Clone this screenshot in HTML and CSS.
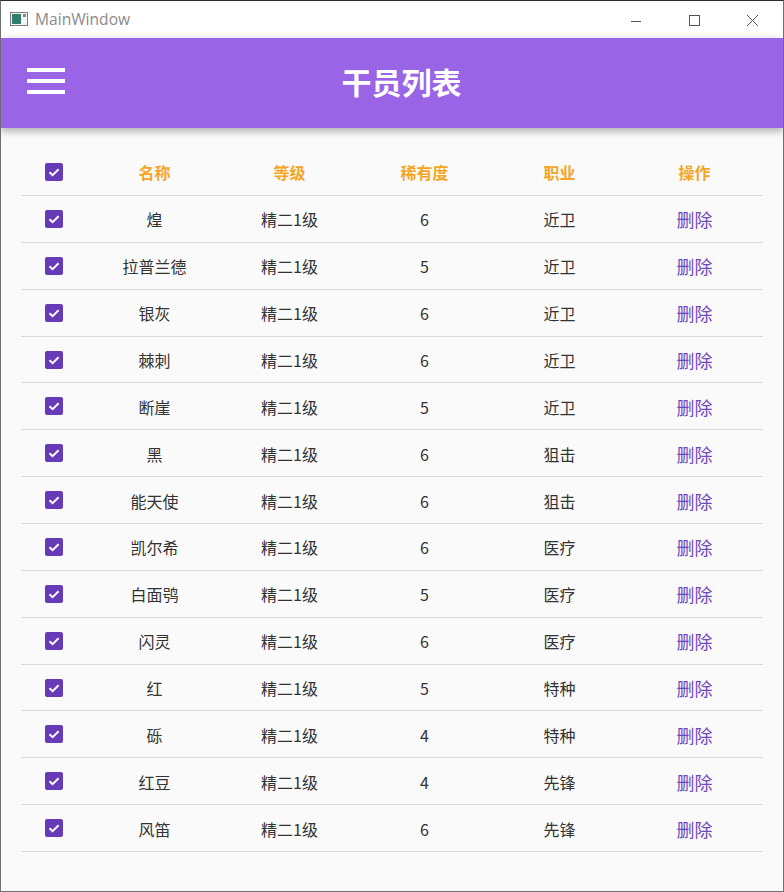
FILE: index.html
```html
<!DOCTYPE html>
<html lang="zh">
<head>
<meta charset="utf-8">
<title>MainWindow</title>
<link rel="stylesheet" href="styles.css">
</head>
<body>
<div class="window">
  <div class="titlebar">
    <div class="tb-left">
      <svg class="app-icon" width="18" height="14" viewBox="0 0 18 14">
        <rect x="0.5" y="0.5" width="17" height="13" fill="#f4f4f4" stroke="#7a7a7a"/>
        <rect x="2" y="2" width="9" height="10" fill="#2f7d6c"/>
        <rect x="13" y="2" width="3" height="3" fill="#8a8a8a"/>
      </svg>
      <span class="tb-title">MainWindow</span>
    </div>
    <div class="tb-controls">
      <svg class="ctl" width="46" height="30" viewBox="0 0 46 30"><line x1="18" y1="18.5" x2="28" y2="18.5" stroke="#555" stroke-width="1"/></svg>
      <svg class="ctl" width="46" height="30" viewBox="0 0 46 30"><rect x="18.5" y="12.5" width="10" height="10" fill="none" stroke="#555" stroke-width="1"/></svg>
      <svg class="ctl" width="46" height="30" viewBox="0 0 46 30"><path d="M18 12 L29 23 M29 12 L18 23" stroke="#555" stroke-width="1"/></svg>
    </div>
  </div>
  <div class="appbar">
    <div class="hamburger"><span></span><span></span><span></span></div>
    <h1 class="app-title">干员列表</h1>
  </div>
  <div class="content">
    <div class="table">
      <div class="row head">
        <div class="cell chk"><span class="checkbox"><svg width="18" height="18" viewBox="0 0 18 18"><path d="M4.5 9.2 L7.6 12.2 L13.6 6.2" fill="none" stroke="#fff" stroke-width="2"/></svg></span></div>
        <div class="cell">名称</div><div class="cell">等级</div><div class="cell">稀有度</div><div class="cell">职业</div><div class="cell">操作</div>
      </div>
      <div class="row"><div class="cell chk"><span class="checkbox"><svg width="18" height="18" viewBox="0 0 18 18"><path d="M4.5 9.2 L7.6 12.2 L13.6 6.2" fill="none" stroke="#fff" stroke-width="2"/></svg></span></div><div class="cell">煌</div><div class="cell">精二1级</div><div class="cell">6</div><div class="cell">近卫</div><div class="cell del">删除</div></div>
      <div class="row"><div class="cell chk"><span class="checkbox"><svg width="18" height="18" viewBox="0 0 18 18"><path d="M4.5 9.2 L7.6 12.2 L13.6 6.2" fill="none" stroke="#fff" stroke-width="2"/></svg></span></div><div class="cell">拉普兰德</div><div class="cell">精二1级</div><div class="cell">5</div><div class="cell">近卫</div><div class="cell del">删除</div></div>
      <div class="row"><div class="cell chk"><span class="checkbox"><svg width="18" height="18" viewBox="0 0 18 18"><path d="M4.5 9.2 L7.6 12.2 L13.6 6.2" fill="none" stroke="#fff" stroke-width="2"/></svg></span></div><div class="cell">银灰</div><div class="cell">精二1级</div><div class="cell">6</div><div class="cell">近卫</div><div class="cell del">删除</div></div>
      <div class="row"><div class="cell chk"><span class="checkbox"><svg width="18" height="18" viewBox="0 0 18 18"><path d="M4.5 9.2 L7.6 12.2 L13.6 6.2" fill="none" stroke="#fff" stroke-width="2"/></svg></span></div><div class="cell">棘刺</div><div class="cell">精二1级</div><div class="cell">6</div><div class="cell">近卫</div><div class="cell del">删除</div></div>
      <div class="row"><div class="cell chk"><span class="checkbox"><svg width="18" height="18" viewBox="0 0 18 18"><path d="M4.5 9.2 L7.6 12.2 L13.6 6.2" fill="none" stroke="#fff" stroke-width="2"/></svg></span></div><div class="cell">断崖</div><div class="cell">精二1级</div><div class="cell">5</div><div class="cell">近卫</div><div class="cell del">删除</div></div>
      <div class="row"><div class="cell chk"><span class="checkbox"><svg width="18" height="18" viewBox="0 0 18 18"><path d="M4.5 9.2 L7.6 12.2 L13.6 6.2" fill="none" stroke="#fff" stroke-width="2"/></svg></span></div><div class="cell">黑</div><div class="cell">精二1级</div><div class="cell">6</div><div class="cell">狙击</div><div class="cell del">删除</div></div>
      <div class="row"><div class="cell chk"><span class="checkbox"><svg width="18" height="18" viewBox="0 0 18 18"><path d="M4.5 9.2 L7.6 12.2 L13.6 6.2" fill="none" stroke="#fff" stroke-width="2"/></svg></span></div><div class="cell">能天使</div><div class="cell">精二1级</div><div class="cell">6</div><div class="cell">狙击</div><div class="cell del">删除</div></div>
      <div class="row"><div class="cell chk"><span class="checkbox"><svg width="18" height="18" viewBox="0 0 18 18"><path d="M4.5 9.2 L7.6 12.2 L13.6 6.2" fill="none" stroke="#fff" stroke-width="2"/></svg></span></div><div class="cell">凯尔希</div><div class="cell">精二1级</div><div class="cell">6</div><div class="cell">医疗</div><div class="cell del">删除</div></div>
      <div class="row"><div class="cell chk"><span class="checkbox"><svg width="18" height="18" viewBox="0 0 18 18"><path d="M4.5 9.2 L7.6 12.2 L13.6 6.2" fill="none" stroke="#fff" stroke-width="2"/></svg></span></div><div class="cell">白面鸮</div><div class="cell">精二1级</div><div class="cell">5</div><div class="cell">医疗</div><div class="cell del">删除</div></div>
      <div class="row"><div class="cell chk"><span class="checkbox"><svg width="18" height="18" viewBox="0 0 18 18"><path d="M4.5 9.2 L7.6 12.2 L13.6 6.2" fill="none" stroke="#fff" stroke-width="2"/></svg></span></div><div class="cell">闪灵</div><div class="cell">精二1级</div><div class="cell">6</div><div class="cell">医疗</div><div class="cell del">删除</div></div>
      <div class="row"><div class="cell chk"><span class="checkbox"><svg width="18" height="18" viewBox="0 0 18 18"><path d="M4.5 9.2 L7.6 12.2 L13.6 6.2" fill="none" stroke="#fff" stroke-width="2"/></svg></span></div><div class="cell">红</div><div class="cell">精二1级</div><div class="cell">5</div><div class="cell">特种</div><div class="cell del">删除</div></div>
      <div class="row"><div class="cell chk"><span class="checkbox"><svg width="18" height="18" viewBox="0 0 18 18"><path d="M4.5 9.2 L7.6 12.2 L13.6 6.2" fill="none" stroke="#fff" stroke-width="2"/></svg></span></div><div class="cell">砾</div><div class="cell">精二1级</div><div class="cell">4</div><div class="cell">特种</div><div class="cell del">删除</div></div>
      <div class="row"><div class="cell chk"><span class="checkbox"><svg width="18" height="18" viewBox="0 0 18 18"><path d="M4.5 9.2 L7.6 12.2 L13.6 6.2" fill="none" stroke="#fff" stroke-width="2"/></svg></span></div><div class="cell">红豆</div><div class="cell">精二1级</div><div class="cell">4</div><div class="cell">先锋</div><div class="cell del">删除</div></div>
      <div class="row"><div class="cell chk"><span class="checkbox"><svg width="18" height="18" viewBox="0 0 18 18"><path d="M4.5 9.2 L7.6 12.2 L13.6 6.2" fill="none" stroke="#fff" stroke-width="2"/></svg></span></div><div class="cell">风笛</div><div class="cell">精二1级</div><div class="cell">6</div><div class="cell">先锋</div><div class="cell del">删除</div></div>
    </div>
  </div>
</div>
</body>
</html>
```

FILE: styles.css
```css
* { box-sizing: border-box; }
html, body { margin: 0; padding: 0; }
body { width: 784px; height: 892px; overflow: hidden; background: #fafafa; }

.window {
  width: 784px;
  height: 892px;
  border: 1px solid #6f6f6f;
  border-top-color: #2b2b2b;
  background: #fafafa;
  display: flex;
  flex-direction: column;
  overflow: hidden;
  font-family: "Noto Sans CJK SC", "Noto Sans", sans-serif;
}

.titlebar {
  height: 37px;
  flex: none;
  background: #ffffff;
  display: flex;
  align-items: center;
  justify-content: space-between;
}
.tb-left { display: flex; align-items: center; padding-left: 9px; }
.app-icon { display: block; margin-top: -1px; }
.tb-title {
  margin-left: 7px;
  font-family: "Open Sans", "Liberation Sans", sans-serif;
  font-size: 15.6px;
  color: #8a8a8a;
  margin-top: -1px;
}
.tb-controls { display: flex; align-items: center; margin-right: 8px; margin-top: -3px; }
.ctl { display: block; margin-left: 12px; }

.appbar {
  height: 90px;
  flex: none;
  background: #9a64e6;
  position: relative;
  z-index: 1;
  box-shadow: 0 3px 8px rgba(0,0,0,0.32);
  display: flex;
  align-items: center;
  justify-content: center;
}
.hamburger {
  position: absolute;
  left: 26px;
  top: 30px;
  width: 38px;
  display: flex;
  flex-direction: column;
  gap: 7px;
}
.hamburger span { display: block; height: 4px; background: #ffffff; }
.app-title {
  margin: 0;
  font-size: 30px;
  font-weight: 700;
  color: #ffffff;
  letter-spacing: 0;
  margin-left: 19px;
  margin-top: -4px;
}

.content { padding: 21px 20px 0 20px; }
.table { width: 742px; }
.row {
  display: grid;
  grid-template-columns: 66px repeat(5, 135px);
  height: 46.86px;
  border-bottom: 1px solid #d9d9d9;
  align-items: center;
}
.row.head { height: 47px; }
.cell {
  text-align: center;
  font-size: 16px;
  color: #333333;
  line-height: 1;
  margin-top: 1px;
}
.head .cell { color: #f5a524; font-weight: 700; margin-top: -1px; }
.cell.chk { display: flex; justify-content: center; margin-top: 0; }
.checkbox {
  width: 18px;
  height: 18px;
  border-radius: 2px;
  background: #673ab7;
  display: block;
}
.checkbox svg { display: block; }
.cell.del { color: #7048bd; font-size: 18px; }
```
